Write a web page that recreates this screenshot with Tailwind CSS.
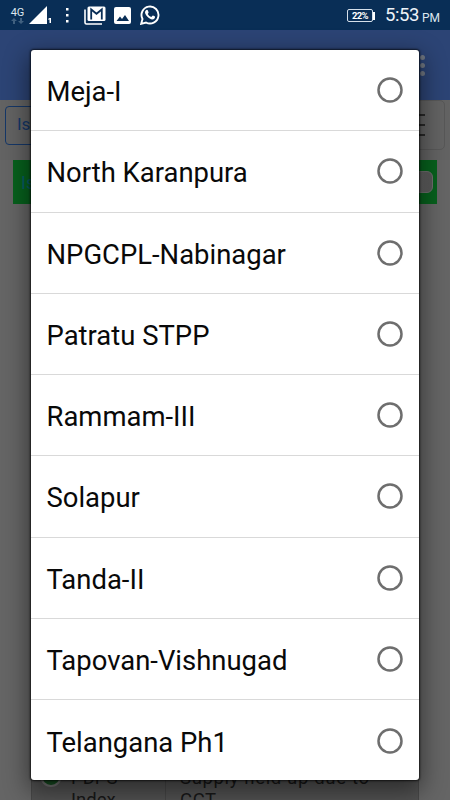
<!DOCTYPE html>
<html lang="en">
<head>
<meta charset="utf-8">
<meta name="viewport" content="width=device-width, initial-scale=1">
<title>Select project</title>
<script src="https://cdn.jsdelivr.net/npm/@tailwindcss/browser@4"></script>
</head>
<body class="w-[450px] h-[800px] overflow-hidden bg-[#656565] font-['Roboto',sans-serif]">
<svg class="hidden"><symbol id="radio" viewBox="0 0 26 26"><circle cx="13" cy="13" r="11.500" fill="none" stroke="#6e6e6e" stroke-width="2.500"/></symbol></svg>
<div class="relative flex h-[800px] w-[450px] flex-col overflow-hidden">
  <header class="flex h-[30px] shrink-0 items-center bg-[#092e56] pl-[10px] pr-[10px] text-white">
    <div class="flex w-[15px] flex-col items-center pt-px">
      <span class="text-[11px] leading-[10px] text-[#dce6ef]">4G</span>
      <svg class="h-[6px] w-[13px]" viewBox="0 0 13 6" fill="#40607f"><path d="M3 0 6 3H4v3H2V3H0zM10 6 7 3h2V0h2v3h2z"/></svg>
    </div>
    <svg class="ml-[4px] h-[18px] w-[18px]" viewBox="0 0 18 18" fill="#fff"><path d="M18 0v18H0z"/></svg>
    <svg class="ml-px mt-[11px] h-[5px] w-[3px]" viewBox="0 0 3 5" fill="#fff"><path d="M0 1 1.500 0H3v5H1.500V1.500H0z"/></svg>
    <svg class="ml-[15px] h-[15px] w-[3px]" viewBox="0 0 3 15" fill="#fff"><path d="M0 0h2.500v2.500H0zM0 6h2.500v2.500H0zM0 12h2.500v2.500H0z"/></svg>
    <svg class="ml-[15px] h-[19px] w-[22px]" viewBox="0 0 22 19" fill="none"><path d="M1 3.500v13Q1 18 2.500 18H18" stroke="#fff" stroke-width="1.600"/><rect x="3.500" y=".5" width="18" height="14.500" rx="1.500" fill="#fff"/><path d="M7.200 13.500V3.500l5.300 4.300 5.300-4.300v10" stroke="#092e56" stroke-width="1.800"/></svg>
    <svg class="ml-[8px] h-[17px] w-[17px]" viewBox="0 0 17 17"><rect width="17" height="17" rx="2" fill="#fff"/><path d="M2.500 14 6 9.500l2 2.500 3-4 4 6z" fill="#092e56"/></svg>
    <svg class="ml-[9px] h-[20px] w-[20px]" viewBox="0 0 20 20"><path d="M1.200 18.800 2.500 14A8.500 8.500 0 1 1 6 17.500z" fill="none" stroke="#fff" stroke-width="1.900"/><path d="M6 5.200q.9-.7 1.600-.1l1 2.200q.1.700-.9 1.600 1.300 2.300 3.600 3.200l1.200-1.400q.5-.4 2.500.9c.3 1.500-.8 2.900-2.700 2.900C9 14.200 5.200 10.300 5 7.300q0-1.300 1-2.100z" fill="#fff"/></svg>
    <div class="ml-auto flex items-center pt-px">
      <span class="flex h-[13px] w-[26px] items-center justify-center rounded-[2px] border border-[#d6e0ea] text-[9.500px] leading-none font-bold tracking-[-0.6px]">22%</span>
      <span class="h-[8px] w-[2px] bg-white"></span>
      <span class="ml-[10px] w-[34px] text-[18.500px] leading-none tracking-[-0.400px] text-[#eef3f8]">5:53</span>
      <span class="ml-[3px] mt-[4px] text-[12px] leading-none text-[#dce6ef]">PM</span>
    </div>
  </header>

  <div class="flex h-[70px] shrink-0 items-center justify-end bg-[#2c4475] pr-[25px]">
    <div class="flex flex-col gap-[3px]">
      <span class="size-[5px] rounded-full bg-[#717883]"></span><span class="size-[5px] rounded-full bg-[#717883]"></span><span class="size-[5px] rounded-full bg-[#717883]"></span>
    </div>
  </div>
  <div class="flex h-[60px] shrink-0 items-start justify-between bg-[#636363] pl-[5px] pr-[5px] pt-[5px]">
    <div class="mt-px flex h-[39px] w-[100px] items-center rounded-[4px] border border-[#153768] pb-[2px] pl-[11px] text-[17px] text-[#153768]">Is</div>
    <div class="-mt-[5px] flex h-[50px] w-[60px] flex-col items-end justify-center gap-[8px] rounded-[5px] border border-[#585858] pr-[19px]">
      <span class="h-[2px] w-[24px] bg-[#292929]"></span><span class="h-[2px] w-[24px] bg-[#292929]"></span><span class="h-[2px] w-[24px] bg-[#292929]"></span>
    </div>
  </div>
  <div class="ml-[13px] mr-[13px] flex h-[44px] shrink-0 items-center justify-between bg-[#07611d] pl-[8px] pr-[4px] text-[18px] text-[#075a68]">
    <span>Is</span><span class="h-[22px] w-[22px] rounded-[6px] border border-[#6e6e6e] bg-linear-to-r from-[#6e6e6e] to-[#555]"></span>
  </div>
  <div class="mx-[31px] mt-auto flex h-[42px] shrink-0 overflow-hidden border-x border-[#484848] bg-[#525252] text-[18.500px] leading-[22px] text-[#181818]">
    <div class="flex w-[134px] shrink-0 border-r border-[#464646] pl-[8px]">
      <span class="mt-[7px] size-[22px] rounded-full border-2 border-[#707070] bg-[#164b20]"></span>
      <span class="ml-[9px] mt-[9px]">PDPS<br>Index</span>
    </div>
    <div class="whitespace-nowrap pl-[14px] pt-[9px] tracking-[0.650px]">Supply held up due to<br>CCT</div>
  </div>

  <main class="absolute left-[31px] top-[50px] flex h-[730px] w-[388px] flex-col overflow-hidden rounded-[3px] bg-white text-[27.450px] text-[#090909] shadow-[0_0_2px_1px_#000a,0_8px_25px_3px_#0007]">
    <div class="flex h-[81.250px] shrink-0 items-center justify-between border-b border-[#d9d9d9] pl-[15.500px] pr-[16px]"><span class="pt-[5px]">Meja-I</span><svg class="size-[26px]"><use href="#radio"/></svg></div>
    <div class="flex h-[81.250px] shrink-0 items-center justify-between border-b border-[#d9d9d9] pl-[15.500px] pr-[16px]"><span class="pt-[5px]">North Karanpura</span><svg class="size-[26px]"><use href="#radio"/></svg></div>
    <div class="flex h-[81.250px] shrink-0 items-center justify-between border-b border-[#d9d9d9] pl-[15.500px] pr-[16px]"><span class="pt-[5px]">NPGCPL-Nabinagar</span><svg class="size-[26px]"><use href="#radio"/></svg></div>
    <div class="flex h-[81.250px] shrink-0 items-center justify-between border-b border-[#d9d9d9] pl-[15.500px] pr-[16px]"><span class="pt-[5px]">Patratu STPP</span><svg class="size-[26px]"><use href="#radio"/></svg></div>
    <div class="flex h-[81.250px] shrink-0 items-center justify-between border-b border-[#d9d9d9] pl-[15.500px] pr-[16px]"><span class="pt-[5px]">Rammam-III</span><svg class="size-[26px]"><use href="#radio"/></svg></div>
    <div class="flex h-[81.250px] shrink-0 items-center justify-between border-b border-[#d9d9d9] pl-[15.500px] pr-[16px]"><span class="pt-[5px]">Solapur</span><svg class="size-[26px]"><use href="#radio"/></svg></div>
    <div class="flex h-[81.250px] shrink-0 items-center justify-between border-b border-[#d9d9d9] pl-[15.500px] pr-[16px]"><span class="pt-[5px]">Tanda-II</span><svg class="size-[26px]"><use href="#radio"/></svg></div>
    <div class="flex h-[81.250px] shrink-0 items-center justify-between border-b border-[#d9d9d9] pl-[15.500px] pr-[16px]"><span class="pt-[5px]">Tapovan-Vishnugad</span><svg class="size-[26px]"><use href="#radio"/></svg></div>
    <div class="flex h-[81.250px] shrink-0 items-center justify-between pl-[15.500px] pr-[16px]"><span class="pt-[5px]">Telangana Ph1</span><svg class="size-[26px]"><use href="#radio"/></svg></div>
  </main>
</div>
</body>
</html>
